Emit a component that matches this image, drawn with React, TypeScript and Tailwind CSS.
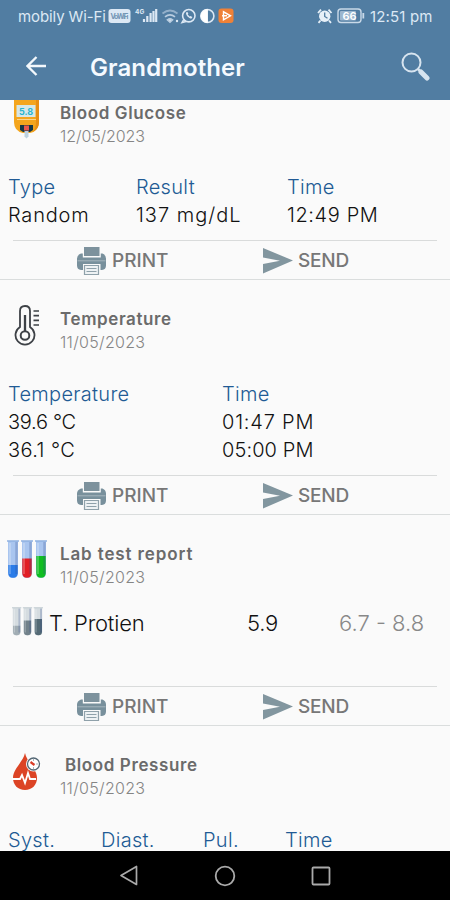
import type { ReactNode } from 'react';

function StatusBar() {
  return (
    <div className="flex h-8 items-center pl-[18px] text-[#dce8f4]">
      <span className="w-[90px] whitespace-nowrap pt-px text-[15px] leading-8 tracking-[-0.1px]">mobily Wi-Fi</span>
      <svg width="132" height="20" viewBox="108 6 132 20" fill="none">
        <rect x="108.500" y="9" width="22" height="14" rx="3" fill="#dce8f4" />
        <text x="119.500" y="18.800" fontSize="7" fontWeight="700" textAnchor="middle" fill="#7195b5" textLength="18">VoWiFi</text>
        <text x="135" y="13.500" fontSize="6.500" fontWeight="700" fill="#dce8f4">4G</text>
        <path d="M144 22v-3M147.300 22v-6M150.600 22V13M153.500 22v-11M156.200 22V9" stroke="#dce8f4" strokeWidth="2.200" />
        <g stroke="#b9cde0" strokeWidth="1.700">
          <path d="M162.500 13.500q7.500-6 15 0" opacity=".65" />
          <path d="M165 16.800q5-4 10 0" />
          <path d="M167.500 19.800q2.500-2 5 0L170 22z" fill="#dce8f4" />
        </g>
        <circle cx="177" cy="21" r="1.200" fill="#dce8f4" />
        <circle cx="188.800" cy="15.700" r="6.200" stroke="#dce8f4" strokeWidth="1.600" />
        <path d="m184 19-2 3.500 4-1" stroke="#dce8f4" strokeWidth="1.500" />
        <path d="M186.300 12.200c-1.500 2 2.800 6.800 5.300 6.300l.8-1.600-2-1-.8.700-1.900-2 .6-.9-.8-1.700z" fill="#dce8f4" />
        <circle cx="207.400" cy="16" r="6.500" stroke="#dce8f4" strokeWidth="1.600" />
        <path d="M207.400 9.500a6.500 6.500 0 0 0 0 13z" fill="#fff" stroke="#fff" />
        <rect x="218.500" y="8.500" width="15" height="14.500" rx="3" fill="#ef8137" />
        <path d="M223.500 11.800v8l7-4zM222 15.800h5" stroke="#fff" strokeWidth="1.400" />
      </svg>
      <svg className="ml-[76px]" width="50" height="20" viewBox="316 6 50 20" fill="none">
        <circle cx="324.700" cy="16.300" r="5.700" fill="#e7f0f8" />
        <path d="m318 13 3-3.400M331.500 13l-3-3.400M320.500 20.500l-2 2.300M329 20.500l2 2.300" stroke="#e7f0f8" strokeWidth="1.800" />
        <path d="M324.700 12.500v4l2.800 1.800" stroke="#517da2" strokeWidth="1.300" />
        <rect x="338" y="9" width="23" height="13.500" rx="3" stroke="#c9d9e8" strokeWidth="1.400" />
        <rect x="340" y="11" width="16" height="9.500" rx="1" fill="#9bb6ce" />
        <text x="349.500" y="20" fontSize="11" fontWeight="600" textAnchor="middle" fill="#fff">66</text>
        <path d="M363.300 13v5.500" stroke="#c9d9e8" strokeWidth="1.800" />
      </svg>
      <span className="ml-[4px] whitespace-nowrap pt-px text-[15px] leading-8 tracking-[0.15px]">12:51 pm</span>
    </div>
  );
}

function PrintIcon() {
  return (
    <svg width="32" height="30" viewBox="0 0 32 30">
      <rect x="8" y="1" width="15.500" height="9" fill="#7d929d" />
      <path d="M5 7.500h1.800V11.500h18V7.500h1.700q3.500 1.500 3.500 5v7q0 4-4 4.500h-1.500v-6H7v6H5q-4-.5-4-4.500v-7q0-3.500 4-5z" fill="#78909c" />
      <path d="M1.500 14.800h28" stroke="#a5b5be" strokeWidth="1" />
      <path d="M8.500 19.500h14v9h-14zM10.500 22.500h10M10.500 25.500h10" fill="#eef2f4" stroke="#8fa1aa" strokeWidth="1.200" />
    </svg>
  );
}

function SendIcon() {
  return (
    <svg width="30" height="26" viewBox="0 0 30 26">
      <path d="M0 0 30 12.500 0 25.500v-9.500l17-3.200L0 9.500z" fill="#82969f" />
    </svg>
  );
}

function GlucoseIcon() {
  return (
    <svg width="30" height="46" viewBox="0 0 30 46">
      <path d="M2 8q0-6 6-6h12q7 0 7 6v21q0 9-9 11h-7q-9-2-9-11z" fill="#f4a51d" />
      <path d="M24 3q3 2 3 5v21q0 7-6 10 3-4 3-10z" fill="#e88e12" />
      <rect x="4.500" y="12" width="19" height="12" fill="#d6e7e7" />
      <text x="14" y="21.500" fontSize="9" fontWeight="700" textAnchor="middle" fill="#27b5d0">5.8</text>
      <path d="M5 26.500h19" stroke="#fbd58c" />
      <path d="M8 32h13v5l-3 2h-7l-3-2z" fill="#173745" />
      <path d="M12 32.500h5v5h-5z" fill="#e9554c" />
      <path d="M12.500 38h4v5.500l-2 2-2-2z" fill="#bdd2df" />
    </svg>
  );
}

function ThermometerIcon() {
  return (
    <svg width="28" height="42" viewBox="0 0 28 42" fill="none" stroke="#3d4146">
      <path d="M6 22V6q0-5 5-5t5 5v16a9.500 9.500 0 1 1-10 0z" strokeWidth="1.800" />
      <circle cx="11" cy="30.500" r="4.300" strokeWidth="2" />
      <path d="M11 10v16" strokeWidth="2.300" />
      <path d="M19.500 6H25M19.500 10.700H25M19.500 15.400H25M19.500 20H25" strokeWidth="1.700" />
    </svg>
  );
}

function Tubes({ small = false }: { small?: boolean }) {
  const fills = small ? ['#a1adb4', '#71818a', '#546a75'] : ['#2b7ce8', '#e11e25', '#0fbd20'];
  const tops = small ? [25, 18, 16] : [25, 18.5, 16];
  return (
    <svg width={small ? 31 : 40} height={small ? 30 : 40} viewBox="0 0 40 40" preserveAspectRatio="none">
      {fills.map((fill, i) => (
        <g key={fill} transform={`translate(${i * 14} 0)`}>
          <path d="M1 1h10v32q0 5-5 5t-5-5z" fill={small ? '#d5dce0' : '#a9c5ef'} />
          <path d={`M1.300 ${tops[i]}h9.400V33q0 4.700-4.700 4.700T1.300 33z`} fill={fill} />
          <path d="M9.500 2v32" stroke="#334c8c" strokeOpacity=".25" strokeWidth="2.500" />
          <path d="M3 3v31" stroke="#fff" strokeOpacity=".3" strokeWidth="1.500" />
          <path d="M0 1h12" stroke={small ? '#c6cfd4' : '#8fb0e1'} strokeWidth="1.500" />
        </g>
      ))}
    </svg>
  );
}

function PressureIcon() {
  return (
    <svg width="30" height="38" viewBox="0 0 30 38" fill="none">
      <path d="M13 0C11 9 1 16 1 25c0 7 5 12 12 12s12-5 12-12C25 16 15 9 13 0z" fill="#dc4425" />
      <path d="M0 26h8l2-4 3 8 3-10 2 6h6" stroke="#fff" strokeWidth="1.800" />
      <circle cx="21.500" cy="11" r="7.500" fill="#fff" />
      <circle cx="21.500" cy="11" r="6" stroke="#546774" strokeWidth="1.300" />
      <path d="m18.500 9 4 3" stroke="#d93d28" strokeWidth="2.200" />
      <path d="M21.500 6.500v1M21.500 14.500v1M25.500 11h-1" stroke="#546774" />
    </svg>
  );
}

interface CardHeadProps {
  icon: ReactNode;
  title: string;
  titleClass: string;
  date: string;
  dateClass?: string;
  padClass?: string;
}

function CardHead({ icon, title, titleClass, date, dateClass = 'tracking-[0.3px]', padClass = 'pt-[27px]' }: CardHeadProps) {
  return (
    <div className="flex h-[99px] shrink-0">
      <div className="w-[60px] shrink-0">{icon}</div>
      <div className={padClass}>
        <div className={`whitespace-nowrap text-[17px] font-semibold leading-6 text-[#6b6b6b] ${titleClass}`}>{title}</div>
        <div className={`-mt-px whitespace-nowrap text-[16px] font-light leading-6 text-[#858585] ${dateClass}`}>{date}</div>
      </div>
    </div>
  );
}

interface Cell {
  text: string;
  tracking: string;
}

function Column({ className, label, values = [] }: { className: string; label: string; values?: Cell[] }) {
  return (
    <div className={`shrink-0 whitespace-nowrap text-[20px] font-light leading-7 text-[#111] ${className}`}>
      <div className="tracking-[0.3px] text-[#215a94]">{label}</div>
      {values.map((v) => (
        <div key={v.text} className={v.tracking}>{v.text}</div>
      ))}
    </div>
  );
}

function Actions() {
  return (
    <div>
      <div className="mx-[13px] h-px bg-[#d9dbdb]" />
      <div className="flex h-[38px] items-center pl-[76px] pt-[2px] text-[19px] font-medium text-[#777]">
        <PrintIcon />
        <span className="ml-1 w-[151px] pt-px">PRINT</span>
        <SendIcon />
        <span className="ml-[5px] pt-px tracking-[-0.2px]">SEND</span>
      </div>
      <div className="h-px bg-[#dadddd]" />
    </div>
  );
}

export default function App() {
  return (
    <div className="flex h-[900px] w-[450px] flex-col overflow-hidden bg-[#fafafa] font-['Inter','Liberation_Sans',sans-serif]">
      <header className="h-[100px] shrink-0 bg-[#517da2]">
        <StatusBar />
        <div className="flex h-[68px] items-center pl-[26px]">
          <svg width="21" height="20" viewBox="0 0 21 20" fill="none" stroke="#f3f8fc" strokeWidth="2.300">
            <path d="M20 10H1.500M10.500 1l-9 9 9 9" />
          </svg>
          <h1 className="ml-[43px] w-[311px] pt-[3px] text-[24px] font-semibold leading-8 tracking-[0.1px] text-[#f5faff]">Grandmother</h1>
          <svg width="29" height="29" viewBox="0 0 29 29" fill="none" stroke="#d7e4ef">
            <circle cx="10.500" cy="10.500" r="9" strokeWidth="2" />
            <path d="m17 17 3 3" strokeWidth="2.500" />
            <path d="m20 20 6 6" strokeWidth="5" strokeLinecap="round" />
          </svg>
        </div>
      </header>

      <main className="flex h-[751px] shrink-0 flex-col overflow-hidden">
        <section className="-mt-[27px] shrink-0">
          <CardHead
            icon={<div className="pl-3 pt-5"><GlucoseIcon /></div>}
            title="Blood Glucose"
            titleClass="tracking-[0.6px]"
            date="12/05/2023"
            dateClass="tracking-[-0.1px]"
            padClass="pt-7"
          />
          <div className="flex pb-[11px] pl-2 pt-px">
            <Column className="w-32" label="Type" values={[{ text: 'Random', tracking: 'tracking-[0.8px]' }]} />
            <Column className="w-[151px]" label="Result" values={[{ text: '137 mg/dL', tracking: 'tracking-[1px]' }]} />
            <Column className="w-32" label="Time" values={[{ text: '12:49 PM', tracking: 'tracking-[0.6px]' }]} />
          </div>
          <Actions />
        </section>

        <section className="shrink-0">
          <CardHead
            icon={<div className="pl-[14px] pt-[25px]"><ThermometerIcon /></div>}
            title="Temperature"
            titleClass="tracking-[0.6px]"
            date="11/05/2023"
          />
          <div className="flex pb-[11px] pl-2 pt-px">
            <Column
              className="w-[214px]"
              label="Temperature"
              values={[
                { text: '39.6 °C', tracking: 'tracking-[-0.3px]' },
                { text: '36.1 °C', tracking: 'tracking-[0.4px]' },
              ]}
            />
            <Column
              className="w-40"
              label="Time"
              values={[
                { text: '01:47 PM', tracking: 'tracking-[0.8px]' },
                { text: '05:00 PM', tracking: 'tracking-[0.1px]' },
              ]}
            />
          </div>
          <Actions />
        </section>

        <section className="shrink-0">
          <CardHead
            icon={<div className="pl-[7px] pt-[25px]"><Tubes /></div>}
            title="Lab test report"
            titleClass="tracking-[0.87px]"
            date="11/05/2023"
          />
          <div className="-mt-[7px] flex h-[79px] pl-3 text-[22px] font-light leading-[32px] text-[#111]">
            <Tubes small />
            <span className="ml-[6px] w-[198px] tracking-[-0.2px]">T. Protien</span>
            <span className="w-[92px] tracking-[-0.3px]">5.9</span>
            <span className="whitespace-nowrap text-[#888]">6.7 - 8.8</span>
          </div>
          <Actions />
        </section>

        <section className="shrink-0">
          <CardHead
            icon={<div className="pl-[12px] pt-[27px]"><PressureIcon /></div>}
            title="Blood Pressure"
            titleClass="pl-[5px] tracking-[0.6px]"
            date="11/05/2023"
          />
          <div className="flex pl-2 pt-px">
            <Column className="w-[93px]" label="Syst." />
            <Column className="w-[102px]" label="Diast." />
            <Column className="w-[82px]" label="Pul." />
            <Column className="w-20" label="Time" />
          </div>
        </section>
      </main>

      <nav className="flex h-[49px] shrink-0 items-center justify-center gap-[75px] bg-black">
        <svg width="20" height="22" viewBox="0 0 20 22" fill="none" stroke="#aaa" strokeWidth="1.700">
          <path d="M17.500 1.500v18L2 10.500z" strokeLinejoin="round" />
        </svg>
        <svg width="22" height="22" viewBox="0 0 22 22" fill="none" stroke="#aaa" strokeWidth="1.800">
          <circle cx="11" cy="11" r="9.300" />
        </svg>
        <svg width="20" height="20" viewBox="0 0 20 20" fill="none" stroke="#aaa" strokeWidth="1.800">
          <rect x="1.500" y="1.500" width="17" height="17" rx="1" />
        </svg>
      </nav>
    </div>
  );
}
